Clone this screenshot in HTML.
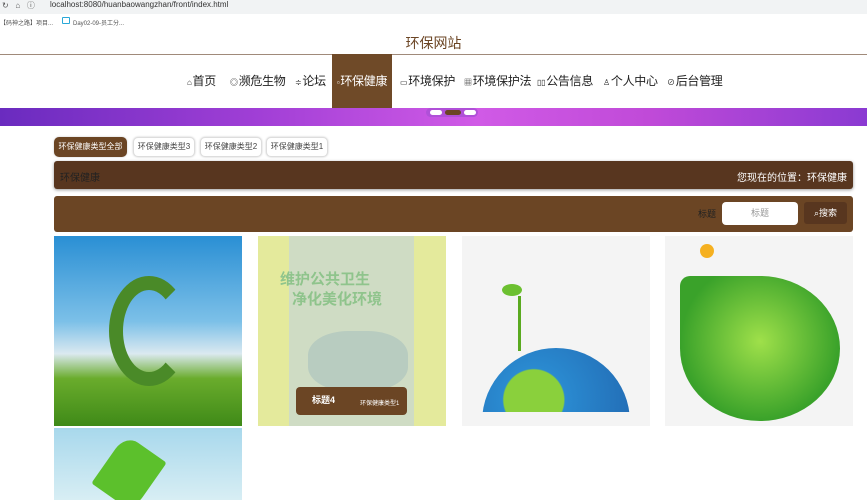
<!DOCTYPE html>
<html><head><meta charset="utf-8"><style>
*{margin:0;padding:0;box-sizing:border-box}
body{width:867px;height:500px;overflow:hidden;background:#fff;font-family:"Liberation Sans","Noto Sans CJK SC",sans-serif;position:relative}
.a{position:absolute}
.nav>span{position:absolute;top:0;height:54px;line-height:54px;font-size:12px;color:#222;white-space:nowrap;letter-spacing:-0.3px}
.nav i{font-style:normal;font-size:8px;margin-right:1px}
.tab{position:absolute;top:137px;height:20px;line-height:18px;font-size:8px;border:1px solid #ddd;border-radius:5px;text-align:center;color:#444;background:#fff;box-shadow:0 0 2px #ccc;white-space:nowrap;overflow:hidden}
.card{position:absolute;overflow:hidden}
</style></head><body>
<div class="a" style="left:0;top:0;width:867px;height:14px;background:#f1f3f4"></div>
<div class="a" style="left:2px;top:0;font-size:8px;color:#555">↻&nbsp;&nbsp;&nbsp;⌂&nbsp;&nbsp;&nbsp;ⓘ</div>
<div class="a" style="left:50px;top:0;font-size:8px;color:#333">localhost:8080/huanbaowangzhan/front/index.html</div>
<div class="a" style="left:0;top:18px;font-size:6px;color:#555">【码神之路】项目...</div>
<div class="a" style="left:62px;top:17px;width:8px;height:7px;border:1px solid #2aa8d8;border-radius:1px"></div>
<div class="a" style="left:73px;top:18px;font-size:6px;color:#555">Day02-09-员工分...</div>
<div class="a" style="left:0;top:33px;width:867px;text-align:center;font-size:14px;color:#6b4524">环保网站</div>
<div class="a" style="left:0;top:54px;width:867px;height:1px;background:#a08a7a"></div>
<div class="a nav" style="left:0;top:54px;width:867px;height:54px">
<span style="left:187px"><i>⌂</i>首页</span>
<span style="left:230px"><i>◎</i>濒危生物</span>
<span style="left:295px"><i>≑</i>论坛</span>
<span style="left:332px;width:60px;background:#6f4a28;color:#fff;text-align:center"><i>▫</i>环保健康</span>
<span style="left:400px"><i>▭</i>环境保护</span>
<span style="left:464px"><i>▦</i>环境保护法</span>
<span style="left:537px"><i>▯▯</i>公告信息</span>
<span style="left:603px"><i>♙</i>个人中心</span>
<span style="left:667px"><i>⊘</i>后台管理</span>
</div>
<div class="a" style="left:0;top:108px;width:867px;height:18px;background:linear-gradient(90deg,#6a2bbf,#a13fd6 30%,#d05ae6 55%,#c04ad8 75%,#8a3ad2)"></div>
<div class="a" style="left:426px;top:108px;width:52px;height:9px;background:#b050d8;border-radius:5px"></div>
<div class="a" style="left:430px;top:110px;width:12px;height:5px;background:#fff;border-radius:3px"></div>
<div class="a" style="left:445px;top:110px;width:16px;height:5px;background:#6b4524;border-radius:3px"></div>
<div class="a" style="left:464px;top:110px;width:12px;height:5px;background:#fff;border-radius:3px"></div>
<div class="tab" style="left:54px;width:73px;background:#6b4524;color:#fff;border-color:#6b4524">环保健康类型全部</div>
<div class="tab" style="left:133px;width:62px">环保健康类型3</div>
<div class="tab" style="left:200px;width:62px">环保健康类型2</div>
<div class="tab" style="left:266px;width:62px">环保健康类型1</div>
<div class="a" style="left:54px;top:161px;width:799px;height:28px;background:#58361f;border-radius:3px;box-shadow:0 1px 3px #999"></div>
<div class="a" style="left:60px;top:169px;font-size:10px;color:#222">环保健康</div>
<div class="a" style="left:700px;top:169px;width:147px;text-align:right;font-size:10px;color:#fff">您现在的位置：环保健康</div>
<div class="a" style="left:54px;top:196px;width:799px;height:36px;background:#6b4524;border-radius:3px"></div>
<div class="a" style="left:698px;top:207px;font-size:9px;color:#222">标题</div>
<div class="a" style="left:722px;top:202px;width:76px;height:23px;background:#fff;border-radius:4px;text-align:center;line-height:23px;font-size:9px;color:#999">标题</div>
<div class="a" style="left:804px;top:202px;width:43px;height:22px;background:#58361f;border-radius:3px;text-align:center;line-height:22px;font-size:9px;color:#fff">⌕搜索</div>

<div class="card" style="left:54px;top:236px;width:188px;height:190px;background:linear-gradient(180deg,#2a8fd4 0%,#7cc0e8 45%,#dbe9f0 62%,#6aac2c 75%,#3f8a18 100%)">
<div class="a" style="left:55px;top:40px;width:80px;height:110px;border:14px solid #4a8a28;border-radius:50%;border-right-color:transparent"></div></div>

<div class="card" style="left:258px;top:236px;width:188px;height:190px;background:#e4ea9c">
<div class="a" style="left:31px;top:0;width:125px;height:190px;background:#cfdcc4"></div>
<div class="a" style="left:22px;top:32px;font-size:15px;font-weight:bold;color:#8fc48c">维护公共卫生</div>
<div class="a" style="left:34px;top:52px;font-size:15px;font-weight:bold;color:#8fc48c">净化美化环境</div>
<div class="a" style="left:50px;top:95px;width:100px;height:60px;background:#b8ccc0;border-radius:40%"></div>
<div class="a" style="left:38px;top:151px;width:111px;height:28px;background:#6b4524;border-radius:4px"></div>
<div class="a" style="left:54px;top:157px;font-size:9px;color:#fff;font-weight:bold">标题4</div>
<div class="a" style="left:102px;top:162px;font-size:6px;color:#fff">环保健康类型1</div></div>

<div class="card" style="left:462px;top:236px;width:188px;height:190px;background:#f4f4f4">
<div class="a" style="left:20px;top:112px;width:148px;height:148px;border-radius:50%;background:radial-gradient(circle at 35% 35%,#8ad03c 0 22%,#2a8ad0 23%,#1f5ea8)"></div>
<div class="a" style="left:0;top:176px;width:188px;height:14px;background:#f4f4f4"></div>
<div class="a" style="left:56px;top:60px;width:3px;height:55px;background:#5aaa20"></div>
<div class="a" style="left:40px;top:48px;width:20px;height:12px;border-radius:50%;background:#6cc030"></div></div>

<div class="card" style="left:665px;top:236px;width:188px;height:190px;background:#f4f4f4">
<div class="a" style="left:15px;top:40px;width:160px;height:145px;background:radial-gradient(circle at 50% 45%,#9fe04a,#3aa22a 70%);border-radius:10px 50% 50% 50%"></div>
<div class="a" style="left:35px;top:8px;width:14px;height:14px;border-radius:50%;background:#f5b020"></div></div>

<div class="card" style="left:54px;top:428px;width:188px;height:72px;background:linear-gradient(180deg,#a8d8ec,#d8eef4)">
<div class="a" style="left:50px;top:15px;width:50px;height:60px;background:#5cc02c;transform:rotate(35deg);border-radius:30% 5%"></div></div>
</body></html>
